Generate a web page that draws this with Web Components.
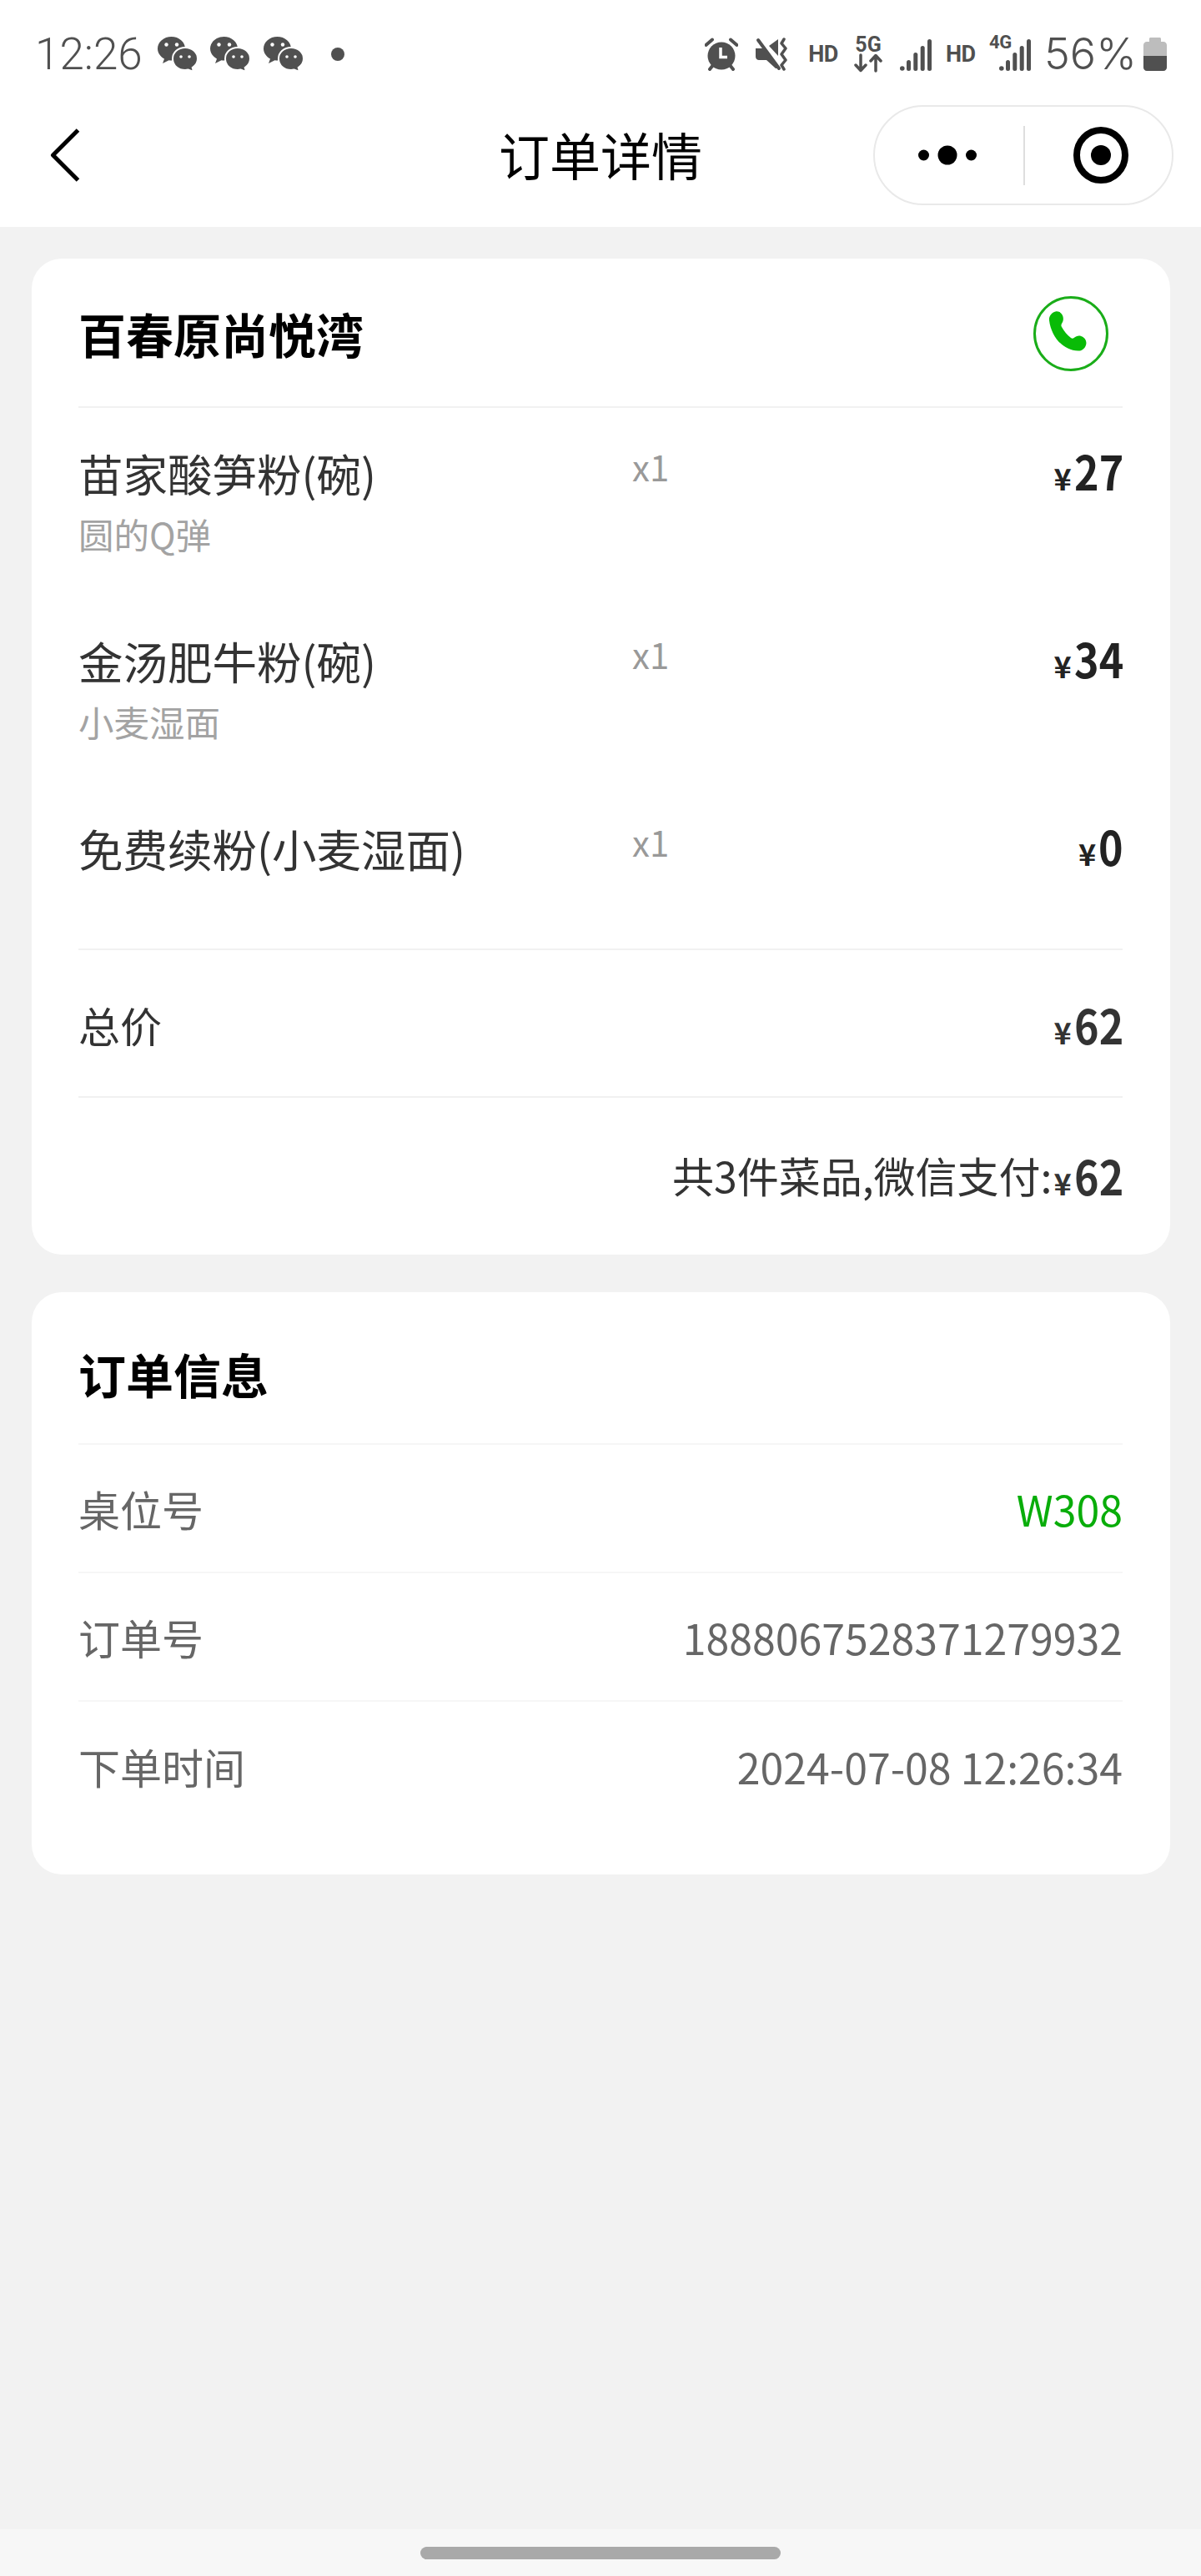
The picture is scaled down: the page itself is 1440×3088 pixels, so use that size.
<!DOCTYPE html>
<html lang="zh">
<head>
<meta charset="utf-8">
<title>订单详情</title>
<style>
    html, body { margin: 0; padding: 0; background: #f2f2f2; }
    body { font-family: "Noto Sans CJK SC", "Noto Sans", sans-serif; }
</style>
</head>
<body>

<order-page>
    <status-bar slot="top"></status-bar>
    <nav-bar slot="top">订单详情</nav-bar>

    <info-card>
        <span slot="title">百春原尚悦湾</span>
        <phone-icon slot="action"></phone-icon>
        <div slot="body">
            <item-list>
                <order-item qty="x1" price="27" note="圆的Q弹">苗家酸笋粉(碗)</order-item>
                <order-item qty="x1" price="34" note="小麦湿面">金汤肥牛粉(碗)</order-item>
                <order-item qty="x1" price="0">免费续粉(小麦湿面)</order-item>
            </item-list>
            <total-row price="62">总价</total-row>
            <total-row price="62" kind="summary">共3件菜品,微信支付:</total-row>
        </div>
    </info-card>

    <info-card second>
        <span slot="title">订单信息</span>
        <div slot="body">
            <kv-row label="桌位号" accent>W308</kv-row>
            <kv-row label="订单号">1888067528371279932</kv-row>
            <kv-row label="下单时间" last>2024-07-08 12:26:34</kv-row>
        </div>
    </info-card>

    <home-bar slot="bottom"></home-bar>
</order-page>

<script>
// page frame: white header, grey content, home bar at the bottom
class OrderPage extends HTMLElement {
    constructor() {
        super();
        this.attachShadow({ mode: 'open' });
        this.shadowRoot.innerHTML = `
        <style>
            :host { display: flex; flex-direction: column; height: 3088px; overflow: hidden; background: #f2f2f2; }
            header { background: #fff; height: 272px; }
            main { flex: 1; padding: 38px 37px 0 38px; display: flex; flex-direction: column; gap: 45px; }
        </style>
        <header><slot name="top"></slot></header>
        <main><slot></slot></main>
        <slot name="bottom"></slot>
        `;
    }
}

// top system bar
class StatusBar extends HTMLElement {
    constructor() {
        super();
        this.attachShadow({ mode: 'open' });
        const chat = `
            <svg class="chat" width="48" height="42" viewBox="0 0 48 42">
                <path d="M16.5 0C7.4 0 0 6.4 0 14.3c0 5.200 3.200 9.700 8 12.200L6 32l7.500-3.800c1 .2 2 .3 3 .3 9.100 0 16.500-6.300 16.500-14.200S25.600 0 16.500 0z" fill="#505050"/>
                <circle cx="10.500" cy="9.500" r="2.200" fill="#fff"/><circle cx="23" cy="9.500" r="2.200" fill="#fff"/>
                <path d="M33 13c-8.300 0-15 5.700-15 13.500S24.700 40 33 40c1.300 0 2.500-.2 3.700-.5l6.300 2.500-1.300-5C45.500 34.500 48 30.800 48 26.500 48 18.700 41.300 13 33 13z" fill="#505050" stroke="#fff" stroke-width="2"/>
                <circle cx="28" cy="24" r="1.800" fill="#fff"/><circle cx="38" cy="24" r="1.800" fill="#fff"/>
            </svg>`;
        const bars = `
            <svg width="38" height="38" viewBox="0 0 38 38" fill="#505050">
                <circle cx="2.800" cy="35" r="2.800"/>
                <rect x="8" y="25" width="5" height="13" rx="2.500"/>
                <rect x="16.300" y="16" width="5" height="22" rx="2.500"/>
                <rect x="24.700" y="8" width="5" height="30" rx="2.500"/>
                <rect x="33" y="0" width="5" height="38" rx="2.500"/>
            </svg>`;
        this.shadowRoot.innerHTML = `
        <style>
            :host { display: flex; align-items: center; height: 110px; padding: 10px 41px 0 42px; color: #505050; font-family: Roboto, sans-serif; }
            .time { font-size: 53px; font-weight: 300; width: 127px; line-height: 1; white-space: nowrap; }
            .chat { flex: none; }
            .dot { width: 16px; height: 16px; border-radius: 50%; background: #505050; margin-left: 33px; }
            .right { margin-left: auto; display: flex; align-items: center; }
            svg { display: block; flex: none; }
            .hd { font-size: 27px; font-weight: 700; width: 36px; text-align: center; line-height: 1; letter-spacing: -.5px; }
            .net { width: 34px; display: flex; flex-direction: column; align-items: center; }
            .net b { font-size: 25px; line-height: 21px; }
            .sig { position: relative; margin-top: 2px; }
            .sig b { position: absolute; left: -12px; top: -5px; font-size: 22px; line-height: 18px; letter-spacing: -.3px; }
            .pct { font-family: Inter, Roboto, sans-serif; font-size: 52px; font-weight: 300; width: 110px; line-height: 1; white-space: nowrap; }
        </style>
        <span class="time">12:26</span>
        ${chat.replace('class="chat"', 'class="chat" style="margin-left:20px"')}
        ${chat.replace('class="chat"', 'class="chat" style="margin-left:15px"')}
        ${chat.replace('class="chat"', 'class="chat" style="margin-left:16px"')}
        <span class="dot"></span>
        <div class="right">
            <svg width="40" height="40" viewBox="0 0 40 40" fill="#505050">
                <path d="M1.500 9 9 2.500" stroke="#505050" stroke-width="4" stroke-linecap="round"/>
                <path d="M38.500 9 31 2.500" stroke="#505050" stroke-width="4" stroke-linecap="round"/>
                <path d="M6 38l4-5M34 38l-4-5" stroke="#505050" stroke-width="4" stroke-linecap="round"/>
                <circle cx="20" cy="22" r="16.500"/>
                <path d="M19 12v11.500h8" fill="none" stroke="#fff" stroke-width="3.500"/>
            </svg>
            <svg style="margin-left:21px" width="39" height="40" viewBox="0 0 39 40" fill="#505050">
                <path d="M0 13h7l3 0 17 20v4h-3L13 27H4c-2 0-4-1.500-4-4z"/>
                <path d="M16 10 27 2v20z"/>
                <path d="M3 3l25 34" stroke="#505050" stroke-width="4" stroke-linecap="round"/>
                <path d="M34 2l-3 5 5 6-5 7 5 7-5 6 3 5" fill="none" stroke="#505050" stroke-width="3.500" stroke-linecap="round" stroke-linejoin="round"/>
            </svg>
            <span class="hd" style="margin-left:24px">HD</span>
            <div class="net" style="margin-left:19px">
                <b>5G</b>
                <svg width="34" height="23" viewBox="0 0 34 23" fill="none" stroke="#505050" stroke-width="3.500" stroke-linecap="round" stroke-linejoin="round">
                    <path d="M8 2v18M2 14l6 6.500 6-6.500"/>
                    <path d="M26 21V3M20 9l6-6.500L32 9"/>
                </svg>
            </div>
            <div style="margin-left:21px;margin-top:2px">${bars}</div>
            <span class="hd" style="margin-left:17px;width:34px">HD</span>
            <div class="sig" style="margin-left:30px"><b>4G</b>${bars}</div>
            <span class="pct" style="margin-left:16px">56%</span>
            <svg style="margin-left:9px" width="28" height="40" viewBox="0 0 28 40">
                <path d="M7 1.500C7 .7 7.700 0 8.500 0h11c.8 0 1.500.7 1.500 1.500V5h3c2.200 0 4 1.800 4 4v14H0V9c0-2.200 1.800-4 4-4h3z" fill="#bdbdbd"/>
                <path d="M0 22h28v14c0 2.200-1.800 4-4 4H4c-2.200 0-4-1.800-4-4z" fill="#505050"/>
            </svg>
        </div>
        `;
    }
}

// mini program navigation bar with back arrow and capsule
class NavBar extends HTMLElement {
    constructor() {
        super();
        this.attachShadow({ mode: 'open' });
        this.shadowRoot.innerHTML = `
        <style>
            :host { display: grid; grid-template-columns: 1fr auto 1fr; align-items: center; height: 132px; padding-bottom: 20px; color: #000; }
            .back { padding-left: 60px; display: flex; }
            .title { font-size: 61px; line-height: 80px; margin-top: -2px; }
            .right { display: flex; justify-content: flex-end; padding-right: 33px; }
            .capsule { box-sizing: border-box; width: 360px; height: 120px; border: 2px solid #e9e9e9; border-radius: 60px; display: flex; align-items: center; }
            .more { box-sizing: border-box; width: 178px; padding-right: 4px; display: flex; justify-content: center; }
            .line { width: 2px; height: 71px; background: #dedede; }
            .target { flex: 1; padding-left: 6px; display: flex; justify-content: center; }
            svg { display: block; }
        </style>
        <div class="back">
            <svg width="36" height="64" viewBox="0 0 36 64" fill="none" stroke="#000" stroke-width="5">
                <path d="M33.500 2 3.500 32l30 30" stroke-linejoin="round"/>
            </svg>
        </div>
        <div class="title"><slot></slot></div>
        <div class="right">
            <div class="capsule">
                <div class="more">
                    <svg width="70" height="24" viewBox="0 0 70 24" fill="#000">
                        <circle cx="6.500" cy="12" r="6.500"/><circle cx="35" cy="12" r="11.500"/><circle cx="63.500" cy="12" r="6.500"/>
                    </svg>
                </div>
                <div class="line"></div>
                <div class="target">
                    <svg width="66" height="68" viewBox="0 0 66 68">
                        <ellipse cx="33" cy="34" rx="29" ry="30" fill="none" stroke="#000" stroke-width="8"/>
                        <circle cx="33" cy="34" r="12"/>
                    </svg>
                </div>
            </div>
        </div>
        `;
    }
}

class PhoneIcon extends HTMLElement {
    constructor() {
        super();
        this.attachShadow({ mode: 'open' });
        this.shadowRoot.innerHTML = `
        <style>
            :host { display: block; width: 90px; height: 90px; margin-top: 3px; }
            svg { display: block; }
        </style>
        <svg width="90" height="90" viewBox="0 0 90 90">
            <circle cx="45" cy="45" r="43.500" fill="none" stroke="#1aad19" stroke-width="3"/>
            <path d="M19 29c-.5-5 3-9.500 7.500-10.500 4.500-1 8 2 9 6 .8 3.200.3 6-1.500 8.500-.8 1.200-.8 2.500 0 4 3 5.500 6.500 9.500 11 13 1.300 1 2.500 1 3.700 0 2.500-2 5.500-3 8.500-2 4.500 1.500 7 5.500 6 10-1 4.500-5 8-9.500 7.500C36 65.500 21.500 49 19 29z" fill="#09bb07"/>
        </svg>
        `;
    }
}

// white rounded card with a heading row and free body
class InfoCard extends HTMLElement {
    constructor() {
        super();
        this.attachShadow({ mode: 'open' });
        this.shadowRoot.innerHTML = `
        <style>
            :host { display: block; background: #fff; border-radius: 36px; padding: 0 57px 0 56px; }
            .head { display: flex; align-items: center; justify-content: space-between; height: 177px; border-bottom: 2px solid #f1f1f1; padding-right: 17px; font-size: 57px; font-weight: 700; color: #000; }
            :host([second]) .head { box-sizing: border-box; height: 183px; padding-top: 12px; border-bottom-color: #f6f6f6; }
            :host([second]) { padding-bottom: 53px; }
            .title { line-height: 76px; }
        </style>
        <div class="head"><span class="title"><slot name="title"></slot></span><slot name="action"></slot></div>
        <slot name="body"></slot>
        `;
    }
}

class ItemList extends HTMLElement {
    constructor() {
        super();
        this.attachShadow({ mode: 'open' });
        this.shadowRoot.innerHTML = `
        <style>
            :host { display: block; padding-bottom: 40px; border-bottom: 2px solid #f1f1f1; }
        </style>
        <slot></slot>
        `;
    }
}

// yen sign plus condensed bold amount
class PriceTag extends HTMLElement {
    constructor() {
        super();
        this.attachShadow({ mode: 'open' });
    }

    connectedCallback() {
        // digits are squeezed with a transform, so take back the space it leaves per digit
        const squeeze = this.textContent.trim().length * 4;
        this.shadowRoot.innerHTML = `
        <style>
            :host { display: inline-flex; align-items: baseline; font-weight: 700; color: var(--price-color, #222); white-space: nowrap; }
            .yen { font-size: 36px; margin-right: 3px; line-height: 1; }
            .num { display: inline-block; font-size: 57px; line-height: 1; transform: scaleX(.88); transform-origin: right center; margin-left: -${squeeze}px; margin-right: -1px; }
        </style>
        <span class="yen">¥</span><span class="num"><slot></slot></span>
        `;
    }
}

class OrderItem extends HTMLElement {
    constructor() {
        super();
        this.attachShadow({ mode: 'open' });
    }

    connectedCallback() {
        const note = this.getAttribute('note');
        this.shadowRoot.innerHTML = `
        <style>
            :host { display: grid; grid-template-columns: 664px 1fr auto; padding: 42px 0 44px; align-items: start; }
            .name { font-size: 53.500px; line-height: 72px; color: #333; }
            .note { font-size: 42.500px; line-height: 60px; color: #a3a3a3; margin-top: 7px; }
            .qty { font-size: 42px; line-height: 56px; color: #999; }
            .price { margin-top: 4px; }
        </style>
        <div>
            <div class="name"><slot></slot></div>
            ${note ? `<div class="note">${note}</div>` : ''}
        </div>
        <div class="qty">${this.getAttribute('qty')}</div>
        <price-tag class="price">${this.getAttribute('price')}</price-tag>
        `;
    }
}

class TotalRow extends HTMLElement {
    constructor() {
        super();
        this.attachShadow({ mode: 'open' });
    }

    connectedCallback() {
        this.shadowRoot.innerHTML = `
        <style>
            :host { display: flex; align-items: center; justify-content: space-between; box-sizing: border-box; height: 177px; padding-top: 2px; font-size: 50px; color: #333; border-bottom: 2px solid #f1f1f1; --price-color: #333; }
            :host([kind="summary"]) { height: 188px; padding: 0 0 4px; justify-content: flex-end; border-bottom: none; }
            :host([kind="summary"]) price-tag { margin-left: 2px; }
        </style>
        <span><slot></slot></span>
        <price-tag>${this.getAttribute('price')}</price-tag>
        `;
    }
}

class KvRow extends HTMLElement {
    constructor() {
        super();
        this.attachShadow({ mode: 'open' });
    }

    connectedCallback() {
        this.shadowRoot.innerHTML = `
        <style>
            :host { display: flex; align-items: center; justify-content: space-between; height: 154px; box-sizing: border-box; border-bottom: 2px solid #f6f6f6; font-size: 50px; color: #666; }
            :host([last]) { border-bottom: none; }
            :host([accent]) .val { color: #09ad0a; }
        </style>
        <span>${this.getAttribute('label')}</span>
        <span class="val"><slot></slot></span>
        `;
    }
}

class HomeBar extends HTMLElement {
    constructor() {
        super();
        this.attachShadow({ mode: 'open' });
        this.shadowRoot.innerHTML = `
        <style>
            :host { display: flex; justify-content: center; height: 56px; background: #f7f7f7; padding-top: 21px; box-sizing: border-box; }
            div { width: 432px; height: 15px; border-radius: 8px; background: #a9a9a9; }
        </style>
        <div></div>
        `;
    }
}

window.customElements.define('order-page', OrderPage);
window.customElements.define('status-bar', StatusBar);
window.customElements.define('nav-bar', NavBar);
window.customElements.define('phone-icon', PhoneIcon);
window.customElements.define('info-card', InfoCard);
window.customElements.define('item-list', ItemList);
window.customElements.define('price-tag', PriceTag);
window.customElements.define('order-item', OrderItem);
window.customElements.define('total-row', TotalRow);
window.customElements.define('kv-row', KvRow);
window.customElements.define('home-bar', HomeBar);
</script>
</body>
</html>
